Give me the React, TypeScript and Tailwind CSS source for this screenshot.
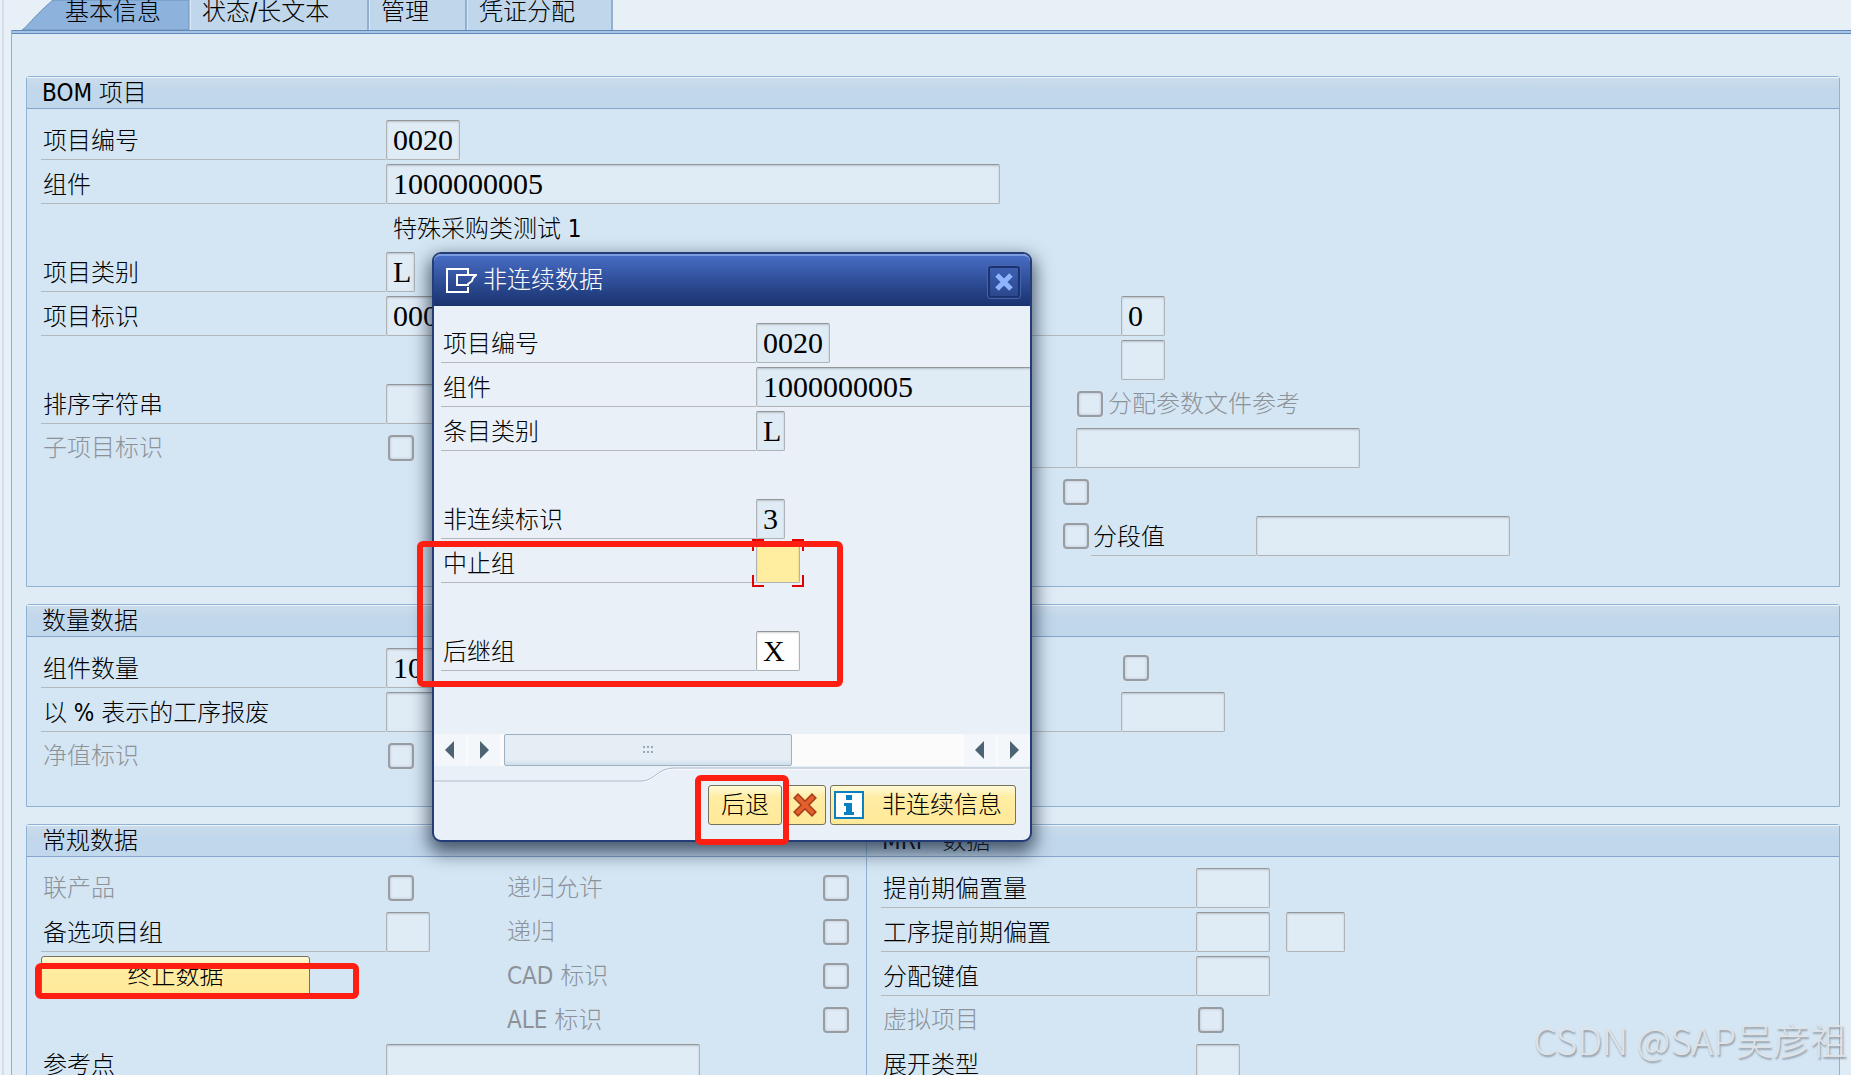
import React, { useId } from 'react'

const tabs = [
  { text: '状态/长文本', width: 'w-[179px]' },
  { text: '管理', width: 'w-[98px]' },
  { text: '凭证分配', width: 'w-[146px]' },
]

type FieldProps = {
  label?: string
  labelWidth?: string
  name?: string
  value?: string
  width?: string
  tone?: string
  children?: React.ReactNode
}

const Box = ({
  id,
  name,
  value = '',
  width = 'w-11',
  tone = 'bg-[#dfebf5]',
}: {
  id?: string
  name?: string
  value?: string
  width?: string
  tone?: string
}) => (
  <input
    id={id}
    aria-label={name}
    defaultValue={value}
    className={`${width} ${tone} h-10 shrink-0 rounded-[2px] border border-[#b0b3b5] border-t-[#949698] pl-[6px] font-['Liberation_Serif',serif] text-[30px] leading-9 text-black shadow-[inset_0_1px_2px_rgba(0,0,0,0.18)] outline-none`}
  />
)

const Check = ({ id, name }: { id?: string; name?: string }) => (
  <input
    id={id}
    aria-label={name}
    type="checkbox"
    className="size-[26px] shrink-0 appearance-none rounded-[4px] border-2 border-[#9a9da0] bg-[#dfebf5] shadow-[inset_0_0_3px_rgba(110,110,150,0.35)]"
  />
)

/* underlined label followed by a text field */
const Field = ({ label, labelWidth = 'w-[345px]', name, value, width, tone, children }: FieldProps) => {
  const id = useId()
  return (
    <div className="flex h-10">
      <label
        htmlFor={id}
        className={`${labelWidth} shrink-0 whitespace-pre border-b border-[#b3b8bb] pl-[2px] leading-[42px]`}
      >
        {label}
      </label>
      <Box id={id} name={label ? undefined : name} value={value} width={width} tone={tone} />
      {children}
    </div>
  )
}

/* greyed label followed by a tick box */
const CheckField = ({ label, labelWidth = 'w-[347px]' }: { label: string; labelWidth?: string }) => {
  const id = useId()
  return (
    <div className="flex h-10 items-center">
      <label htmlFor={id} className={`${labelWidth} shrink-0 pl-[2px] leading-[42px] text-[#8d9298]`}>
        {label}
      </label>
      <Check id={id} />
    </div>
  )
}

const Empty = () => <div className="h-10" />

const Group = ({
  title,
  className = '',
  children,
}: {
  title: string
  className?: string
  children: React.ReactNode
}) => (
  <section className={`${className} rounded-t-[3px] border border-[#8fb1d3] bg-[#d4e6f4]`}>
    <h2 className="h-8 whitespace-pre border-t border-b border-t-[#edf4fa] border-b-[#85a5cc] bg-linear-to-b from-[#cbdcec] to-[#c1d7eb] to-40% pl-[15px] leading-[30px]">
      {title}
    </h2>
    <div className="flex pt-[11px] pb-[30px] pl-[14px]">{children}</div>
  </section>
)

const Mark = ({ className }: { className: string }) => (
  <div className={`${className} pointer-events-none absolute z-20 rounded-[6px] border-[6px] border-[#ff1e12]`} />
)

const Arrow = ({ left = false }: { left?: boolean }) => (
  <button
    aria-label={left ? '向左' : '向右'}
    className="flex h-8 w-8 shrink-0 items-center justify-center bg-[#f3f6fb]"
  >
    <svg width="10" height="18" viewBox="0 0 10 18" fill="#4d6373">
      {left ? <path d="M9 0v18L0 9z" /> : <path d="M1 0v18l9-9z" />}
    </svg>
  </button>
)

const yellow =
  'h-10 shrink-0 rounded-[3px] border border-[#77725a] bg-linear-to-b from-[#fff9d8] via-[#ffeda3] via-30% to-[#ffe999]'

const Dialog = () => (
  <div
    role="dialog"
    aria-label="非连续数据"
    className="absolute top-[252px] left-[432px] z-10 w-[600px] rounded-[9px] border-2 border-[#243c78] bg-[#e9f0f7] shadow-[0_8px_18px_3px_rgba(20,35,55,0.7)]"
  >
    <div className="flex h-[52px] items-center rounded-t-[7px] border-t-2 border-t-[#7a9be0] bg-linear-to-b from-[#476cc4] to-[#1a336f] pr-[10px] pb-[2px] pl-3 text-white">
      <svg width="31" height="25" viewBox="0 0 31 25" fill="none" stroke="#fff" strokeWidth="2">
        <path d="M22 6V1H1v23h21v-5" />
        <path d="M11 7h19l-3 3-1 3-4 3v1H11z" />
      </svg>
      <span className="ml-[6px]">非连续数据</span>
      <button
        aria-label="关闭"
        className="mt-1 ml-auto flex h-8 w-8 items-center justify-center rounded-[3px] border-2 border-[#1b3470] bg-linear-to-b from-[#3d5fb2] to-[#2c478d] shadow-[0_0_0_1px_#4565ae]"
      >
        <svg width="18" height="18" viewBox="0 0 18 18" fill="none" stroke="#8fb4ff" strokeWidth="5">
          <path d="M2 2l14 14M16 2L2 16" />
        </svg>
      </button>
    </div>

    <div className="flex flex-col gap-1 pt-[17px] pb-[63px] pl-[7px]">
      <Field label="项目编号" labelWidth="w-[315px]" value="0020" width="w-[74px]" />
      <div className="overflow-hidden">
        <Field label="组件" labelWidth="w-[315px]" value="1000000005" width="w-[300px]" />
      </div>
      <Field label="条目类别" labelWidth="w-[315px]" value="L" width="w-[29px]" />
      <Empty />
      <Field label="非连续标识" labelWidth="w-[315px]" value="3" width="w-[29px]" />
      <div className="relative">
        <Field label="中止组" labelWidth="w-[315px]" tone="bg-[#ffeda0]" />
        {/* focus corners */}
        <svg
          className="absolute -top-1 left-[311px]"
          width="52"
          height="48"
          viewBox="0 0 52 48"
          fill="none"
          stroke="#e00000"
          strokeWidth="2"
        >
          <path d="M1 12V1h11M40 1h11v11M1 36v11h11M40 47h11V36" />
        </svg>
      </div>
      <Empty />
      <Field label="后继组" labelWidth="w-[315px]" value="X" tone="bg-white" />
    </div>

    <div className="flex h-8 gap-[2px] bg-[#fbfbfb]">
      <Arrow left />
      <Arrow />
      <div className="ml-[2px] flex w-[288px] items-center justify-center rounded-[2px] border border-[#9fb0c0] bg-linear-to-b from-[#e6eef5] from-80% to-[#cfdfeb]">
        <svg width="10" height="8" viewBox="0 0 10 8" fill="#9aa9b5">
          <path d="M0 0h2v2H0zM4 0h2v2H4zM8 0h2v2H8zM0 5h2v2H0zM4 5h2v2H4zM8 5h2v2H8z" />
        </svg>
      </div>
      <div className="flex-1" />
      <Arrow left />
      <Arrow />
    </div>

    <svg className="block h-4 w-full" viewBox="0 0 596 16" fill="none">
      <path d="M0 16H208C220 16 224 3 240 3H596" stroke="#fff" />
      <path d="M0 15H208C220 15 224 2 240 2H596" stroke="#a9b8cb" />
    </svg>

    <div className="flex h-[58px] items-start justify-end gap-1 pt-[3px] pr-[14px]">
      <button className={`${yellow} w-[74px]`}>后退</button>
      <button aria-label="取消" className={`${yellow} flex w-10 items-center justify-center`}>
        <svg className="mr-[2px]" width="24" height="24" viewBox="0 0 24 24" fill="none" strokeLinecap="square">
          <path d="M5 5l14 14M19 5L5 19" stroke="#a93a1c" strokeWidth="7" />
          <path d="M5 5l14 14M19 5L5 19" stroke="#e2602a" strokeWidth="4" />
        </svg>
      </button>
      <button className={`${yellow} flex w-[186px] items-center pl-[3px]`}>
        <svg width="30" height="28" viewBox="0 0 30 28">
          <path d="M1 1h28v26H1z" fill="#fff" stroke="#0a80c4" strokeWidth="2" />
          <path d="M12 4h6v5h-6zM10 12h8v9h2v3H10v-3h2v-6h-2z" fill="#0a80c4" />
        </svg>
        <span className="ml-[18px]">非连续信息</span>
      </button>
    </div>
  </div>
)

const App = () => (
  <div className="relative flex h-screen flex-col overflow-hidden bg-[#e8f0f7] pl-[11px] font-['DejaVu_Sans_Condensed','Noto_Sans','Noto_Sans_CJK_SC',sans-serif] text-[24px] leading-6 font-light text-black">
    <div className="absolute inset-y-0 left-[2px] w-[2px] bg-[#d5dcea]" />

    {/* Tabs */}
    <nav className="flex h-[30px] shrink-0 pl-[9px]">
      <button className="relative w-[170px] pb-[6px] pl-[45px] text-left">
        <svg className="absolute inset-0" width="170" height="30" viewBox="0 0 170 30">
          <path d="M2 30C8 26 12 18 33 0h136v30z" fill="#8db2dc" stroke="#6b90be" />
        </svg>
        <span className="relative">基本信息</span>
      </button>
      {tabs.map((tab) => (
        <button
          key={tab.text}
          className={`${tab.width} border-r-2 border-l border-r-[#92afd0] border-l-[#dbe8f3] bg-[#c0d6ea] pb-[6px] pl-[11px] text-left`}
        >
          {tab.text}
        </button>
      ))}
    </nav>

    <main className="flex flex-1 flex-col gap-[17px] border-l border-[#8fb1d3] bg-[#dfebf5] pr-[11px] pl-[14px]">
      <div className="-mr-[11px] -mb-[17px] -ml-[14px] h-[46px] shrink-0">
        <div className="h-1 border-t border-b border-[#5f88bb] bg-[#a6c3e4]" />
      </div>

      <Group title="BOM 项目">
        <div className="flex w-[960px] shrink-0 flex-col gap-1">
          <Field label="项目编号" value="0020" width="w-[74px]" />
          <Field label="组件" value="1000000005" width="w-[614px]" />
          <p className="h-10 pl-[352px] leading-[42px]">特殊采购类测试 1</p>
          <Field label="项目类别" value="L" width="w-[29px]" />
          <Field label="项目标识" value="00000001" width="w-[135px]" />
          <Empty />
          <Field label="排序字符串" width="w-[164px]" />
          <CheckField label="子项目标识" />
          <Empty />
          <Empty />
        </div>
        <div className="flex flex-col gap-1 pt-44">
          <Field labelWidth="w-[120px]" name="计数器" value="0" />
          <div className="flex h-10 pl-[120px]">
            <Box name="类型" />
          </div>
          <label className="flex h-10 items-center gap-[5px] pl-[76px] leading-[42px] text-[#8d9298]">
            <Check />
            分配参数文件参考
          </label>
          <Field labelWidth="w-[75px]" name="参数文件" width="w-[284px]" />
          <div className="flex h-10 items-center pl-[62px]">
            <Check name="标识" />
          </div>
          <div className="flex h-10 items-center gap-[2px] pl-[62px]">
            <Check name="分段" />
            <Field label="分段值" labelWidth="w-[165px]" width="w-[254px]" />
          </div>
        </div>
      </Group>

      <Group title="数量数据">
        <div className="flex w-[960px] shrink-0 flex-col gap-1">
          <Field label="组件数量" value="10" width="w-[164px]" />
          <Field label="以 % 表示的工序报废" width="w-[74px]" />
          <CheckField label="净值标识" />
        </div>
        <div className="flex flex-col gap-1">
          <div className="flex h-10 items-center pl-[122px]">
            <Check name="固定数量" />
          </div>
          <Field labelWidth="w-[120px]" name="组件报废" width="w-[104px]" />
        </div>
      </Group>

      <div className="flex">
        <Group title="常规数据" className="-mr-px w-[841px] shrink-0">
          <div className="flex flex-col gap-1">
            <div className="flex w-[811px]">
              <div className="flex w-[464px] flex-col gap-1">
                <CheckField label="联产品" />
                <Field label="备选项目组" />
                <div className="relative h-10 w-[269px]">
                  <button className={`${yellow} w-full`}>终止数据</button>
                  <Mark className="top-[7px] -left-[6px] h-9 w-[324px]" />
                </div>
                <Empty />
              </div>
              <div className="flex flex-col gap-1">
                <CheckField label="递归允许" labelWidth="w-[318px]" />
                <CheckField label="递归" labelWidth="w-[318px]" />
                <CheckField label="CAD 标识" labelWidth="w-[318px]" />
                <CheckField label="ALE 标识" labelWidth="w-[318px]" />
              </div>
            </div>
            <Field label="参考点" width="w-[314px]" />
          </div>
        </Group>
        <Group title="MRP  数据" className="flex-1">
          <div className="flex flex-col gap-1">
            <Field label="提前期偏置量" labelWidth="w-[315px]" width="w-[74px]" />
            <Field label="工序提前期偏置" labelWidth="w-[315px]" width="w-[74px]">
              <div className="ml-4">
                <Box name="单位" width="w-[59px]" />
              </div>
            </Field>
            <Field label="分配键值" labelWidth="w-[315px]" width="w-[74px]" />
            <CheckField label="虚拟项目" labelWidth="w-[317px]" />
            <Field label="展开类型" labelWidth="w-[315px]" />
          </div>
        </Group>
      </div>
    </main>

    <Dialog />

    <Mark className="top-[541px] left-[417px] h-[146px] w-[426px]" />
    <Mark className="top-[775px] left-[695px] h-[70px] w-[94px]" />

    <div className="absolute right-1 bottom-3 z-20 font-['Noto_Sans_CJK_SC',sans-serif] text-[37px] leading-[48px] text-[#dfe3e8] [text-shadow:1px_2px_2px_#8f979f]">
      CSDN @SAP吴彦祖
    </div>
  </div>
)

export default App
